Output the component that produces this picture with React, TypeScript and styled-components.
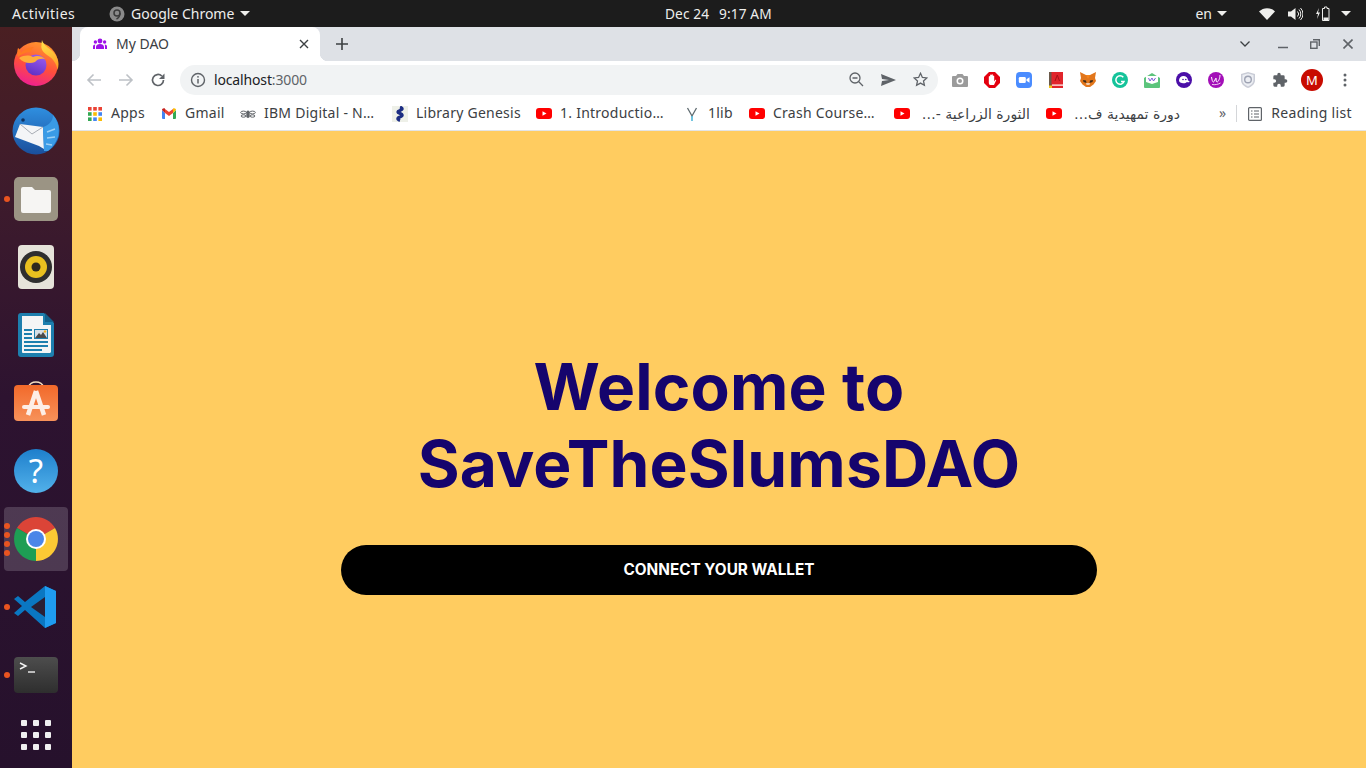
import React from "react";
import styled, { createGlobalStyle } from "styled-components";

const GlobalStyle = createGlobalStyle`
  html, body {
    margin: 0;
    padding: 0;
    height: 100%;
    overflow: hidden;
    font-family: "Noto Sans", "DejaVu Sans", sans-serif;
  }
  * { box-sizing: border-box; }
`;

const Screen = styled.div`
  width: 1366px;
  height: 768px;
  display: flex;
  flex-direction: column;
  overflow: hidden;
`;

const TopBar = styled.header`
  height: 27px;
  flex: none;
  display: flex;
  align-items: center;
  background: #1c1c1c;
  color: #eeeeec;
  font-size: 14px;
  padding-left: 12px;
  padding-right: 15px;
`;

const Activities = styled.span`
  width: 97px;
  letter-spacing: 0.5px;
`;

const AppMenu = styled.div`
  width: 556px;
  display: flex;
  align-items: center;
  gap: 6px;
`;

const Clock = styled.div`
  display: flex;
  gap: 10px;
  font-size: 13.7px;
  letter-spacing: 0.1px;
`;

const Tray = styled.div`
  margin-left: auto;
  display: flex;
  align-items: center;
`;

const Caret = styled.span<{ $gap?: number }>`
  width: 0;
  height: 0;
  margin-left: ${(p) => p.$gap ?? 0}px;
  border-left: 5px solid transparent;
  border-right: 5px solid transparent;
  border-top: 5px solid #eeeeec;
`;

const TrayIcon = styled.svg<{ $gap: number }>`
  margin-left: ${(p) => p.$gap}px;
  display: block;
`;

const Desktop = styled.div`
  flex: 1;
  display: flex;
  min-height: 0;
`;

const Dock = styled.nav`
  width: 72px;
  flex: none;
  display: flex;
  flex-direction: column;
  padding-top: 2px;
  background: linear-gradient(180deg, #4a1f22 0%, #3e1b2c 22%, #2d1330 50%, #26112c 100%);
`;

const DockItem = styled.div<{ $active?: boolean }>`
  position: relative;
  height: 68px;
  display: flex;
  align-items: center;
  justify-content: center;
  &::before {
    content: "";
    position: absolute;
    left: 4px;
    top: 2px;
    width: 64px;
    height: 64px;
    border-radius: 4px;
    background: ${(p) => (p.$active ? "rgba(255,255,255,0.17)" : "transparent")};
  }
  svg {
    position: relative;
  }
`;

const DockDots = styled.div`
  position: absolute;
  left: 4px;
  top: 0;
  bottom: 0;
  display: flex;
  flex-direction: column;
  justify-content: center;
  gap: 3px;
`;

const DockDot = styled.span`
  width: 6px;
  height: 6px;
  border-radius: 50%;
  background: #e95420;
`;

const AppsGrid = styled.div`
  height: 50px;
  margin-top: 1px;
  display: flex;
  align-items: center;
  justify-content: center;
`;

const Browser = styled.div`
  flex: 1;
  min-width: 0;
  display: flex;
  flex-direction: column;
`;

const TabStrip = styled.div`
  height: 34px;
  flex: none;
  display: flex;
  align-items: flex-end;
  background: #dee1e6;
  padding-left: 8px;
  color: #5f6368;
`;

const Tab = styled.div`
  position: relative;
  width: 240px;
  height: 34px;
  display: flex;
  align-items: center;
  padding: 0 11px 0 13px;
  background: #fff;
  border-radius: 8px 8px 0 0;
  color: #3c4043;
  font-size: 14px;
  &::before,
  &::after {
    content: "";
    position: absolute;
    bottom: 0;
    width: 8px;
    height: 8px;
  }
  &::before {
    left: -8px;
    background: radial-gradient(circle at 0 0, #dee1e6 8px, #fff 8.5px);
  }
  &::after {
    right: -8px;
    background: radial-gradient(circle at 100% 0, #dee1e6 8px, #fff 8.5px);
  }
`;

const TabTitle = styled.span`
  margin-left: 9px;
  padding-bottom: 2px;
  flex: 1;
`;

const NewTab = styled.div`
  margin-left: 12px;
  width: 20px;
  height: 34px;
  display: flex;
  align-items: center;
  justify-content: center;
`;

const WindowControls = styled.div`
  margin-left: auto;
  height: 34px;
  display: flex;
  align-items: center;
  padding-right: 8px;
`;

const WindowButton = styled.div<{ $w: number; $ml?: number }>`
  width: ${(p) => p.$w}px;
  margin-left: ${(p) => p.$ml ?? 0}px;
  display: flex;
  justify-content: center;
`;

const Toolbar = styled.div`
  height: 37px;
  flex: none;
  display: flex;
  align-items: center;
  padding-left: 6px;
  background: #fff;
`;

const Slot = styled.div<{ $w?: number }>`
  width: ${(p) => p.$w ?? 32}px;
  height: 30px;
  flex: none;
  display: flex;
  align-items: center;
  justify-content: center;
`;

const Omnibox = styled.div`
  width: 758px;
  height: 30px;
  margin: 0 6px;
  display: flex;
  align-items: center;
  padding: 0 2px 0 10px;
  border-radius: 15px;
  background: #f1f3f4;
`;

const Url = styled.span`
  margin-left: 8px;
  flex: 1;
  font-size: 14px;
  letter-spacing: -0.15px;
  color: #202124;
  span {
    color: #5f6368;
  }
`;

const Avatar = styled.div`
  width: 22px;
  height: 22px;
  border-radius: 50%;
  background: #c80b00;
  color: #fff;
  font-size: 13px;
  display: flex;
  align-items: center;
  justify-content: center;
`;

const BookmarksBar = styled.div`
  height: 33px;
  flex: none;
  display: flex;
  align-items: center;
  padding: 0 0 1px 7px;
  background: #fff;
  border-bottom: 1px solid #e3e4e6;
  font-size: 14px;
  color: #3c4043;
`;

const Bookmark = styled.div<{ $w: number }>`
  width: ${(p) => p.$w}px;
  flex: none;
  display: flex;
  align-items: center;
  padding: 0 8px;
  white-space: nowrap;
  overflow: hidden;
`;

const BookmarkIcon = styled.span`
  width: 16px;
  height: 16px;
  flex: none;
  margin-right: 8px;
  display: flex;
  align-items: center;
  justify-content: center;
`;

const BookmarkLabel = styled.span<{ $spacing?: number }>`
  padding-bottom: 2px;
  letter-spacing: ${(p) => p.$spacing ?? 0.25}px;
`;

const RtlLabel = styled.span`
  flex: 1;
  direction: rtl;
  font-family: "DejaVu Sans", "Noto Sans", sans-serif;
  font-size: 14px;
  overflow: hidden;
`;

const MoreBookmarks = styled.span`
  margin-left: auto;
  padding-bottom: 2px;
  font-size: 14px;
  color: #5f6368;
`;

const BarSeparator = styled.span`
  width: 1px;
  height: 17px;
  margin: 0 11px 0 10px;
  background: #d4d6d9;
`;

const ReadingList = styled.div`
  display: flex;
  align-items: center;
  gap: 9px;
  padding-right: 14px;
`;

const Page = styled.main`
  flex: 1;
  display: flex;
  justify-content: center;
  padding-top: 217px;
  background: #ffcc60;
`;

const Hero = styled.div`
  width: 756px;
  display: flex;
  flex-direction: column;
  align-items: stretch;
`;

const Title = styled.h1`
  margin: 0 0 43px;
  text-align: center;
  font-family: Inter, "Liberation Sans", sans-serif;
  font-size: 64px;
  font-weight: 700;
  line-height: 77px;
  letter-spacing: 0.15px;
  color: #15046d;
`;

const ConnectButton = styled.button`
  height: 50px;
  padding: 0 0 2px;
  border: 0;
  border-radius: 25px;
  background: #000;
  color: #fff;
  font-family: Inter, "Liberation Sans", sans-serif;
  font-size: 15.3px;
  font-weight: 700;
  cursor: pointer;
`;

const YouTubeIcon = () => (
  <svg width="16" height="11" viewBox="0 0 16 11">
    <rect width="16" height="11" rx="3" fill="#f00" />
    <path d="M6.500 3.200v4.600l4-2.300z" fill="#fff" />
  </svg>
);

const AppsIcon = () => {
  const colors = ["#ea4335", "#ea4335", "#ea4335", "#34a853", "#fbbc05", "#4285f4", "#34a853", "#4285f4", "#fbbc05"];
  return (
    <svg width="14" height="14" viewBox="0 0 14 14">
      {colors.map((c, i) => (
        <rect key={i} x={(i % 3) * 5.2} y={Math.floor(i / 3) * 5.2} width="3.6" height="3.6" fill={c} />
      ))}
    </svg>
  );
};

const GmailIcon = () => (
  <svg width="14" height="11" viewBox="0 0 14 11">
    <path d="M0 2v8a1 1 0 0 0 1 1h2V5z" fill="#4285f4" />
    <path d="M14 2v8a1 1 0 0 1-1 1h-2V5z" fill="#34a853" />
    <path d="M3 5v-4l4 3 4-3v4L7 8z" fill="#ea4335" />
    <path d="M0 2c0-1.600 1.800-2.400 3-1.400V5z" fill="#c5221f" />
    <path d="M14 2c0-1.600-1.800-2.400-3-1.400V5z" fill="#fbbc05" />
  </svg>
);

const BeeIcon = () => (
  <svg width="16" height="10" viewBox="0 0 16 10" fill="none" stroke="#5f6368" strokeWidth="1">
    <ellipse cx="3.500" cy="3.500" rx="2.800" ry="1.400" />
    <ellipse cx="12.500" cy="3.500" rx="2.800" ry="1.400" />
    <ellipse cx="3.500" cy="7" rx="2.400" ry="1.200" />
    <ellipse cx="12.500" cy="7" rx="2.400" ry="1.200" />
    <rect x="6.300" y="1.500" width="3.400" height="7.500" rx="1.700" fill="#5f6368" stroke="none" />
  </svg>
);

const LibraryIcon = () => (
  <svg width="16" height="16" viewBox="0 0 16 16">
    <rect width="16" height="16" fill="#eef0e8" />
    <path d="M8 1c3 1 3 2.500 0 3.500S5 6.500 8 7.500s3 2.500 0 3.500-3 2.500 0 3.500" fill="none" stroke="#1c2d83" strokeWidth="3" />
  </svg>
);

const OneLibIcon = () => (
  <svg width="12" height="14" viewBox="0 0 12 14" fill="none">
    <path d="M1.500 1L6 9l4.500-8" stroke="#5f6b70" strokeWidth="1.300" />
    <path d="M6 9v5" stroke="#4fb6d8" strokeWidth="1.600" />
  </svg>
);

const CameraIcon = () => (
  <svg width="16" height="14" viewBox="0 0 16 14">
    <path d="M5.500 1h5L12 3h3a1 1 0 0 1 1 1v9a1 1 0 0 1-1 1H1a1 1 0 0 1-1-1V4a1 1 0 0 1 1-1h3z" fill="#9b9b9b" />
    <circle cx="8" cy="8" r="3.500" fill="#fff" />
    <circle cx="8" cy="8" r="2" fill="#9b9b9b" />
  </svg>
);

const StopHandIcon = () => (
  <svg width="16" height="16" viewBox="0 0 16 16">
    <path d="M5 0h6l5 5v6l-5 5H5l-5-5V5z" fill="#e4000f" />
    <path d="M4.800 8V4.500a.7.7 0 0 1 1.300 0V7V3.300a.7.7 0 0 1 1.400 0V7V3a.7.7 0 0 1 1.400 0v4V4a.7.7 0 0 1 1.300 0v5.500l1-1.500c.5-.6 1.200 0 .9.500L10 13H6.500C5 13 4.800 11.500 4.800 10.500z" fill="#fff" />
  </svg>
);

const ZoomIcon = () => (
  <svg width="16" height="16" viewBox="0 0 16 16">
    <rect width="16" height="16" rx="4" fill="#4a8cff" />
    <rect x="2.800" y="5" width="7" height="6" rx="1.300" fill="#fff" />
    <path d="M10.500 7.300l3-2v5.400l-3-2z" fill="#fff" />
  </svg>
);

const RedBookIcon = () => (
  <svg width="14" height="16" viewBox="0 0 14 16">
    <rect width="14" height="16" fill="#e1252b" />
    <rect width="2.500" height="16" fill="#6b5a4a" />
    <rect x="3" y="12.500" width="11" height="1.200" fill="#fff" />
    <path d="M6 9l2.300-6L10.500 9" fill="none" stroke="#a51318" strokeWidth="1" />
    <rect x="0" y="13.500" width="3" height="2.500" fill="#f5c518" />
  </svg>
);

const FoxIcon = () => (
  <svg width="16" height="15" viewBox="0 0 16 15">
    <path d="M0 0l6 3h4l6-3-1 6 1 3-2.500 3.500L10 15H6l-3.500-2.500L0 9l1-3z" fill="#e2761b" />
    <path d="M3 8l3 .5.500 2.500L3.500 10zM13 8l-3 .5-.5 2.500 3-1z" fill="#3c2a1a" />
    <path d="M6 11h4l-.5 2h-3z" fill="#f0cdb0" />
    <path d="M6 3h4l-2 4z" fill="#f6851b" />
  </svg>
);

const GrammarlyIcon = () => (
  <svg width="16" height="16" viewBox="0 0 16 16">
    <circle cx="8" cy="8" r="8" fill="#15c39a" />
    <path d="M11.300 5.300A4.200 4.200 0 1 0 12 9.500H9" fill="none" stroke="#fff" strokeWidth="1.500" />
  </svg>
);

const MailCheckIcon = () => (
  <svg width="16" height="16" viewBox="0 0 16 16">
    <path d="M0 6l8-5 8 5v9a1 1 0 0 1-1 1H1a1 1 0 0 1-1-1z" fill="#5cc47c" />
    <path d="M2 4h12v6l-6 2-6-2z" fill="#fff" />
    <path d="M4.500 6l1.500 3 2-3 1.500 3 2-3" fill="none" stroke="#7b5cd6" strokeWidth="1" />
  </svg>
);

const GhostIcon = () => (
  <svg width="16" height="16" viewBox="0 0 16 16">
    <circle cx="8" cy="8" r="8" fill="#4b0fa8" />
    <path d="M3 8.500a4.500 4.500 0 0 1 9 0c1 .3 1.500.8 1.500 1.500-1 .4-2 .3-2.500 0-1.500 1.500-3.500 1.500-5 1-1.500 0-3-1-3-2.500z" fill="#fff" />
    <circle cx="7" cy="7.500" r=".8" fill="#4b0fa8" />
    <circle cx="9.800" cy="7.500" r=".8" fill="#4b0fa8" />
  </svg>
);

const ScribbleIcon = () => (
  <svg width="16" height="16" viewBox="0 0 16 16">
    <circle cx="8" cy="8" r="8" fill="#a30fb8" />
    <path d="M3.500 5c.5 3 1 5 2 5s2-4 2.500-4-.5 4 1 4 3-4 3-7" fill="none" stroke="#fff" strokeWidth="1" />
    <path d="M4 12.500c3 .5 6 0 8.500-1.500" fill="none" stroke="#fff" strokeWidth=".8" />
  </svg>
);

const ShieldIcon = () => (
  <svg width="14" height="16" viewBox="0 0 14 16">
    <path d="M7 0l7 2v6c0 4-3 6.500-7 8-4-1.500-7-4-7-8V2z" fill="#c9ccd6" />
    <path d="M7 1.500l5.500 1.600V8c0 3.200-2.400 5.200-5.500 6.400C3.900 13.200 1.500 11.200 1.500 8V3.100z" fill="#eceef3" />
    <circle cx="7" cy="7.500" r="3.300" fill="none" stroke="#9ea3b3" strokeWidth="1.400" />
  </svg>
);

const PuzzleIcon = () => (
  <svg width="16" height="16" viewBox="0 0 24 24" fill="#5f6368">
    <path d="M20.500 11H19V7a2 2 0 0 0-2-2h-4V3.500a2.500 2.500 0 0 0-5 0V5H4a2 2 0 0 0-2 2v3.800h1.500a2.700 2.700 0 0 1 0 5.400H2V20a2 2 0 0 0 2 2h3.800v-1.500a2.700 2.700 0 0 1 5.400 0V22H17a2 2 0 0 0 2-2v-4h1.500a2.500 2.500 0 0 0 0-5z" />
  </svg>
);

const FirefoxIcon = () => (
  <svg width="46" height="46" viewBox="0 0 46 46">
    <defs>
      <linearGradient id="ffBody" x1="0.7" y1="0" x2="0.35" y2="1">
        <stop offset="0" stopColor="#ff9a2c" />
        <stop offset="0.55" stopColor="#ff4f3c" />
        <stop offset="1" stopColor="#ee1f92" />
      </linearGradient>
      <linearGradient id="ffFlame" x1="0.4" y1="0" x2="0.6" y2="1">
        <stop offset="0" stopColor="#ffe14a" />
        <stop offset="1" stopColor="#ff9b24" />
      </linearGradient>
      <linearGradient id="ffGlobe" x1="0.7" y1="0" x2="0.3" y2="1">
        <stop offset="0" stopColor="#9a5cf0" />
        <stop offset="1" stopColor="#5f2fc4" />
      </linearGradient>
    </defs>
    <circle cx="23" cy="24" r="22" fill="url(#ffBody)" />
    <path d="M29 0c1 4 5 7 9 10 5 4 7.500 9 7.500 14 0 2-.3 4-1 6-1-6-4-11-9-14-5-3-8-7-7-11 0-2 .2-3.500.5-5z" fill="url(#ffFlame)" />
    <path d="M5 8c2 1 3 3 3 5 3-4 8-6 13-6-2 2-3 3-3 5-5 0-10 2-13 5-1-3-1-6 0-9z" fill="#ff7a22" />
    <circle cx="23" cy="25" r="10.500" fill="url(#ffGlobe)" />
    <path d="M6 18c5-3 10-3 14-1 4-2 9-1 12 2-4-1-8 0-10 3-5 2-12 1-16-4z" fill="#ffae3a" />
  </svg>
);

const ThunderbirdIcon = () => (
  <svg width="48" height="48" viewBox="0 0 48 48">
    <defs>
      <linearGradient id="tbBlue" x1="0.5" y1="0" x2="0.5" y2="1">
        <stop offset="0" stopColor="#2f8fe0" />
        <stop offset="1" stopColor="#1a4f9c" />
      </linearGradient>
    </defs>
    <circle cx="24" cy="24" r="23.500" fill="url(#tbBlue)" />
    <path d="M8 17l23 3 1 22-5-3-24-9z" fill="#f4f5f7" />
    <path d="M8 17l12 10 11-7" fill="none" stroke="#a8adb5" strokeWidth="1" />
    <path d="M31 20c6-2 10-6 10-12 5 6 7 14 5 22-2 6-6 11-10 14l-4 0z" fill="#3a9be6" />
    <path d="M35 25l8-3M35 31l8-1M34 37l6 1" stroke="#9ed0f5" strokeWidth="1.500" />
    <circle cx="11" cy="13" r="1.800" fill="#10325f" />
  </svg>
);

const FilesIcon = () => (
  <svg width="44" height="44" viewBox="0 0 44 44">
    <rect width="44" height="44" rx="5" fill="#9b9484" />
    <path d="M7 12a2 2 0 0 1 2-2h9l3 3h14a2 2 0 0 1 2 2v19a2 2 0 0 1-2 2H9a2 2 0 0 1-2-2z" fill="#f6f5f3" />
  </svg>
);

const RhythmboxIcon = () => (
  <svg width="36" height="44" viewBox="0 0 36 44">
    <rect width="36" height="44" rx="4" fill="#e6e3da" />
    <circle cx="18" cy="22" r="16" fill="#2f2f2f" />
    <circle cx="18" cy="22" r="11" fill="#e9c11f" />
    <circle cx="18" cy="22" r="4.500" fill="#2d2a1e" />
  </svg>
);

const WriterIcon = () => (
  <svg width="36" height="44" viewBox="0 0 36 44">
    <path d="M3 0h23l10 10v31a3 3 0 0 1-3 3H3a3 3 0 0 1-3-3V3a3 3 0 0 1 3-3z" fill="#1d7fae" />
    <path d="M4 3h21v9h8v27a2 2 0 0 1-1 1H5a1 1 0 0 1-1-1z" fill="#f4f5f5" />
    <path d="M27 0l9 9h-9z" fill="#14608a" />
    <path d="M6 16h8v2H6zM6 20h8v2H6zM6 24h8v2H6zM6 28h24v2H6zM6 32h24v2H6zM6 36h18v2H6z" fill="#1d7fae" />
    <rect x="16" y="16" width="14" height="10" fill="#1d7fae" />
    <rect x="17" y="17" width="12" height="8" fill="#d6dfe6" />
    <path d="M17 25l4-5 2 2 2-3 4 6z" fill="#4a4a4a" />
    <circle cx="27" cy="18.500" r="1.200" fill="#f2b11c" />
  </svg>
);

const SoftwareIcon = () => (
  <svg width="44" height="44" viewBox="0 0 44 44">
    <defs>
      <linearGradient id="swBag" x1="0" y1="0" x2="0" y2="1">
        <stop offset="0" stopColor="#f2692a" />
        <stop offset="1" stopColor="#f7925a" />
      </linearGradient>
    </defs>
    <path d="M15 7V5.500a7 4.500 0 0 1 14 0V7" fill="none" stroke="#f3dcc0" strokeWidth="1.500" />
    <rect y="4" width="44" height="36" rx="4" fill="url(#swBag)" />
    <path d="M22 10l-8 24M22 10l8 24" stroke="#fdeee6" strokeWidth="4.500" fill="none" />
    <rect x="8" y="24" width="28" height="4" rx="2" fill="#fdeee6" />
  </svg>
);

const HelpIcon = () => (
  <svg width="44" height="44" viewBox="0 0 44 44">
    <defs>
      <linearGradient id="helpBlue" x1="0" y1="0" x2="0" y2="1">
        <stop offset="0" stopColor="#1e7fcc" />
        <stop offset="1" stopColor="#52b1ea" />
      </linearGradient>
    </defs>
    <circle cx="22" cy="22" r="22" fill="url(#helpBlue)" />
    <text x="22" y="34" textAnchor="middle" fontFamily="Noto Sans" fontSize="33" fill="#fff">?</text>
  </svg>
);

const ChromeIcon = () => (
  <svg width="44" height="44" viewBox="0 0 44 44">
    <path d="M22 22L3 11A22 22 0 0 1 41 11z" fill="#db4437" />
    <path d="M22 22L41 11A22 22 0 0 1 22 44z" fill="#fcc934" />
    <path d="M22 22L22 44A22 22 0 0 1 3 11z" fill="#1e9e54" />
    <circle cx="22" cy="22" r="10" fill="#fff" />
    <circle cx="22" cy="22" r="8" fill="#4a86e8" />
  </svg>
);

const VsCodeIcon = () => (
  <svg width="44" height="44" viewBox="0 0 44 44">
    <path d="M31 1l11 5v32l-11 5L11 25 4 31l-4-3 8-7-8-7 4-3 7 6z" fill="#0a77c2" />
    <path d="M31 1l11 5v32l-11 5z" fill="#1f9cf0" />
    <path d="M31 12L17 22l14 10z" fill="#2a2036" />
  </svg>
);

const TerminalIcon = () => (
  <svg width="44" height="36" viewBox="0 0 44 36">
    <defs>
      <linearGradient id="termBg" x1="0" y1="0" x2="0" y2="1">
        <stop offset="0" stopColor="#4d4d4d" />
        <stop offset="1" stopColor="#2e2e2e" />
      </linearGradient>
    </defs>
    <rect width="44" height="36" rx="4" fill="url(#termBg)" />
    <path d="M6 6l6 3-6 3" fill="none" stroke="#f2f2f2" strokeWidth="1.400" />
    <path d="M14 15h7" stroke="#f2f2f2" strokeWidth="1.400" />
  </svg>
);

const GridIcon = () => (
  <svg width="30" height="30" viewBox="0 0 30 30">
    {[0, 1, 2, 3, 4, 5, 6, 7, 8].map((i) => (
      <rect key={i} x={(i % 3) * 12} y={Math.floor(i / 3) * 12} width="6" height="6" rx="1" fill="#f0f0f0" />
    ))}
  </svg>
);

const dockApps = [
  { icon: <FirefoxIcon />, dots: 0 },
  { icon: <ThunderbirdIcon />, dots: 0 },
  { icon: <FilesIcon />, dots: 1 },
  { icon: <RhythmboxIcon />, dots: 0 },
  { icon: <WriterIcon />, dots: 0 },
  { icon: <SoftwareIcon />, dots: 0 },
  { icon: <HelpIcon />, dots: 0 },
  { icon: <ChromeIcon />, dots: 4, active: true },
  { icon: <VsCodeIcon />, dots: 1 },
  { icon: <TerminalIcon />, dots: 1 },
];

const extensions = [
  <CameraIcon />,
  <StopHandIcon />,
  <ZoomIcon />,
  <RedBookIcon />,
  <FoxIcon />,
  <GrammarlyIcon />,
  <MailCheckIcon />,
  <GhostIcon />,
  <ScribbleIcon />,
  <ShieldIcon />,
  <PuzzleIcon />,
];

const bookmarks = [
  { icon: <AppsIcon />, label: "Apps", w: 74 },
  { icon: <GmailIcon />, label: "Gmail", w: 79 },
  { icon: <BeeIcon />, label: "IBM Digital - N…", w: 152 },
  { icon: <LibraryIcon />, label: "Library Genesis", w: 144 },
  { icon: <YouTubeIcon />, label: "1. Introductio…", w: 148 },
  { icon: <OneLibIcon />, label: "1lib", w: 65 },
  { icon: <YouTubeIcon />, label: "Crash Course…", w: 145 },
  { icon: <YouTubeIcon />, label: "الثورة الزراعية -…", w: 152, rtl: true },
  { icon: <YouTubeIcon />, label: "دورة تمهيدية ف…", w: 150, rtl: true },
];

export default function App() {
  return (
    <Screen>
      <GlobalStyle />
      <TopBar>
        <Activities>Activities</Activities>
        <AppMenu>
          <svg width="16" height="16" viewBox="0 0 16 16">
            <circle cx="8" cy="8" r="7.500" fill="#8a8a8a" />
            <circle cx="8" cy="7" r="3" fill="none" stroke="#3a3a3a" strokeWidth="1.500" />
            <path d="M11 7c0 3-1.500 5-3.500 6" fill="none" stroke="#3a3a3a" strokeWidth="1.500" />
          </svg>
          Google Chrome
          <Caret />
        </AppMenu>
        <Clock>
          <span>Dec 24</span>
          <span>9:17 AM</span>
        </Clock>
        <Tray>
          <span>en</span>
          <Caret $gap={5} />
          <TrayIcon $gap={32} width="16" height="12" viewBox="0 0 16 12">
            <path d="M0 3.500C4.500-1 11.500-1 16 3.500L8 12z" fill="#eeeeec" />
          </TrayIcon>
          <TrayIcon $gap={13} width="15" height="14" viewBox="0 0 15 14">
            <path d="M0 4.500h3L7.500 1v12L3 9.500H0z" fill="#eeeeec" />
            <path d="M9.500 4.500a3.500 3.500 0 0 1 0 5M11 2.500a6.500 6.500 0 0 1 0 9M12.500 1a8.500 8.500 0 0 1 0 12" fill="none" stroke="#eeeeec" />
          </TrayIcon>
          <TrayIcon $gap={13} width="14" height="15" viewBox="0 0 14 15">
            <path d="M3 2L0 8h2l-1 5 3-6.500H2z" fill="#eeeeec" />
            <path d="M7 2.500h1.500V1h2.500v1.500h2v12H6.500v-12z" fill="none" stroke="#eeeeec" />
            <rect x="7.500" y="11.500" width="5" height="2.500" fill="#eeeeec" />
          </TrayIcon>
          <Caret $gap={11} />
        </Tray>
      </TopBar>
      <Desktop>
        <Dock>
          {dockApps.map((app, i) => (
            <DockItem key={i} $active={app.active}>
              {app.dots > 0 && (
                <DockDots>
                  {Array.from({ length: app.dots }).map((_, d) => (
                    <DockDot key={d} />
                  ))}
                </DockDots>
              )}
              {app.icon}
            </DockItem>
          ))}
          <AppsGrid>
            <GridIcon />
          </AppsGrid>
        </Dock>
        <Browser>
          <TabStrip>
            <Tab>
              <svg width="14" height="12" viewBox="0 0 14 12" fill="#9d12e8">
                <circle cx="7" cy="3" r="2.400" />
                <circle cx="2.400" cy="4" r="1.700" />
                <circle cx="11.600" cy="4" r="1.700" />
                <path d="M3 11V9c0-1.800 1.800-3 4-3s4 1.200 4 3v2zM0 11V8.500C0 7.300 1 6.500 2.300 6.500 2 7.200 2 8 2 9v2zM14 11V8.500c0-1.200-1-2-2.300-2 .3.700.3 1.500.3 2.500v2z" />
              </svg>
              <TabTitle>My DAO</TabTitle>
              <svg width="10" height="10" viewBox="0 0 10 10" stroke="#3c4043" strokeWidth="1.400">
                <path d="M1 1l8 8M9 1L1 9" />
              </svg>
            </Tab>
            <NewTab>
              <svg width="12" height="12" viewBox="0 0 12 12" stroke="#3c4043" strokeWidth="1.600">
                <path d="M6 0v12M0 6h12" />
              </svg>
            </NewTab>
            <WindowControls>
              <WindowButton $w={32}>
                <svg width="10" height="6" viewBox="0 0 10 6" fill="none" stroke="#3c4043" strokeWidth="1.300">
                  <path d="M.5.500L5 5 9.500.500" />
                </svg>
              </WindowButton>
              <WindowButton $w={44}>
                <svg width="10" height="10" viewBox="0 0 10 10" stroke="#5f6368" strokeWidth="1.500">
                  <path d="M0 8.500h10" />
                </svg>
              </WindowButton>
              <WindowButton $w={20}>
                <svg width="10" height="10" viewBox="0 0 10 10" fill="none" stroke="#5f6368" strokeWidth="1.400">
                  <path d="M3 .7h6.300V7" />
                  <rect x=".7" y="3" width="6.300" height="6.300" />
                </svg>
              </WindowButton>
              <WindowButton $w={20} $ml={13}>
                <svg width="10" height="10" viewBox="0 0 10 10" stroke="#5f6368" strokeWidth="1.600">
                  <path d="M.5.500l9 9M9.500.500l-9 9" />
                </svg>
              </WindowButton>
            </WindowControls>
          </TabStrip>
          <Toolbar>
            <Slot>
              <svg width="16" height="14" viewBox="0 0 16 14" fill="none" stroke="#bdc1c6" strokeWidth="1.600">
                <path d="M15 7H2M7.500 1.500L2 7l5.500 5.500" />
              </svg>
            </Slot>
            <Slot>
              <svg width="16" height="14" viewBox="0 0 16 14" fill="none" stroke="#bdc1c6" strokeWidth="1.600">
                <path d="M1 7h13M8.500 1.500L14 7l-5.500 5.500" />
              </svg>
            </Slot>
            <Slot>
              <svg width="16" height="16" viewBox="0 0 16 16" fill="none">
                <path d="M13.500 8A5.500 5.500 0 1 1 11.800 4" stroke="#5f6368" strokeWidth="1.700" />
                <path d="M14.500 1.500v5.500H9z" fill="#5f6368" />
              </svg>
            </Slot>
            <Omnibox>
              <svg width="16" height="16" viewBox="0 0 16 16" fill="none">
                <circle cx="8" cy="8" r="6.500" stroke="#5f6368" strokeWidth="1.400" />
                <path d="M8 7v4.500" stroke="#5f6368" strokeWidth="1.500" />
                <circle cx="8" cy="4.800" r="0.900" fill="#5f6368" />
              </svg>
              <Url>
                localhost<span>:3000</span>
              </Url>
              <Slot>
                <svg width="15" height="15" viewBox="0 0 15 15" fill="none" stroke="#5f6368" strokeWidth="1.300">
                  <circle cx="6" cy="6" r="5" />
                  <path d="M3.500 6h5M9.800 9.800L14 14" />
                </svg>
              </Slot>
              <Slot>
                <svg width="15" height="12" viewBox="0 0 15 12">
                  <path d="M0 0l15 6-15 6 1-5 7-1-7-1z" fill="#5f6368" />
                </svg>
              </Slot>
              <Slot>
                <svg width="15" height="15" viewBox="0 0 15 15" fill="none" stroke="#5f6368" strokeWidth="1.300">
                  <path d="M7.500 1.300l1.900 4.100 4.400.5-3.300 3 .9 4.400-3.900-2.200-3.900 2.200.9-4.400-3.300-3 4.400-.5z" />
                </svg>
              </Slot>
            </Omnibox>
            {extensions.map((icon, i) => (
              <Slot key={i}>{icon}</Slot>
            ))}
            <Slot $w={32}>
              <Avatar>M</Avatar>
            </Slot>
            <Slot $w={34}>
              <svg width="4" height="14" viewBox="0 0 4 14" fill="#5f6368">
                <circle cx="2" cy="2" r="1.500" />
                <circle cx="2" cy="7" r="1.500" />
                <circle cx="2" cy="12" r="1.500" />
              </svg>
            </Slot>
          </Toolbar>
          <BookmarksBar>
            {bookmarks.map((b) => (
              <Bookmark key={b.label} $w={b.w}>
                <BookmarkIcon>{b.icon}</BookmarkIcon>
                {b.rtl ? <RtlLabel>{b.label}</RtlLabel> : <BookmarkLabel>{b.label}</BookmarkLabel>}
              </Bookmark>
            ))}
            <MoreBookmarks>»</MoreBookmarks>
            <BarSeparator />
            <ReadingList>
              <svg width="14" height="14" viewBox="0 0 14 14" fill="none" stroke="#5f6368" strokeWidth="1.200">
                <rect x=".6" y=".6" width="12.800" height="12.800" rx="1" />
                <path d="M3 4h1.500M6 4h5M3 7h1.500M6 7h5M3 10h1.500M6 10h5" />
              </svg>
              <BookmarkLabel $spacing={0.35}>Reading list</BookmarkLabel>
            </ReadingList>
          </BookmarksBar>
          <Page>
            <Hero>
              <Title>Welcome to SaveTheSlumsDAO</Title>
              <ConnectButton>CONNECT YOUR WALLET</ConnectButton>
            </Hero>
          </Page>
        </Browser>
      </Desktop>
    </Screen>
  );
}
